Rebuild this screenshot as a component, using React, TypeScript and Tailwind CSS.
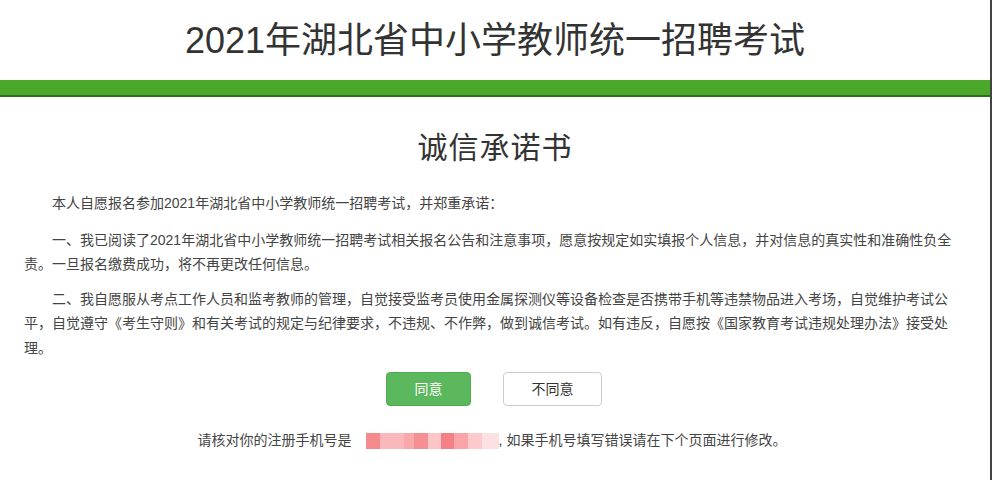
const maskBlocks = [
  { w: 14, c: 'bg-[#f58a8c]' },
  { w: 24, c: 'bg-[#fbb8bc]' },
  { w: 10, c: 'bg-[#f9a8ac]' },
  { w: 14, c: 'bg-[#f58f93]' },
  { w: 13, c: 'bg-[#fcc6c9]' },
  { w: 13, c: 'bg-[#f47f84]' },
  { w: 14, c: 'bg-[#f9a5a8]' },
  { w: 14, c: 'bg-[#fcc9cc]' },
  { w: 17, c: 'bg-[#fde0e2]' },
];

const App = () => {
  return (
    <div className="w-[992px] h-[480px] overflow-hidden bg-white text-[#333] font-['Liberation_Sans','Noto_Sans_CJK_SC',sans-serif] border-r-2 border-[#444]">
      {/* Header */}
      <div className="h-[80px] flex items-center justify-center">
        <h1 className="text-[36px] leading-none text-[#333] pt-[1px]">2021年湖北省中小学教师统一招聘考试</h1>
      </div>
      <div className="h-[17px] bg-[#4ba82a] border-b-2 border-[#2f6e1b]" />

      {/* Content */}
      <div className="bg-white px-6 pt-[36px] pb-10">
        <h2 className="text-center text-[30px] leading-none text-[#333] tracking-[1px]">诚信承诺书</h2>

        <div className="mt-[28px] text-[14px] leading-[24.5px] text-[#444]">
          <p className="indent-[28px]">本人自愿报名参加2021年湖北省中小学教师统一招聘考试，并郑重承诺：</p>
          <p className="indent-[28px] mt-[12px]">
            一、我已阅读了2021年湖北省中小学教师统一招聘考试相关报名公告和注意事项，愿意按规定如实填报个人信息，并对信息的真实性和准确性负全责。一旦报名缴费成功，将不再更改任何信息。
          </p>
          <p className="indent-[28px] mt-[10px]">
            二、我自愿服从考点工作人员和监考教师的管理，自觉接受监考员使用金属探测仪等设备检查是否携带手机等违禁物品进入考场，自觉维护考试公平，自觉遵守《考生守则》和有关考试的规定与纪律要求，不违规、不作弊，做到诚信考试。如有违反，自愿按《国家教育考试违规处理办法》接受处理。
          </p>
        </div>

        <div className="mt-[12px] flex justify-center gap-[32px] pr-[2px]">
          <button className="w-[85px] h-[34px] rounded-[4px] bg-[#5cb85c] text-white text-[14px] border border-[#4cae4c]">同意</button>
          <button className="w-[99px] h-[34px] rounded-[4px] bg-white text-[#333] text-[14px] border border-[#ccc]">不同意</button>
        </div>

        <div className="mt-[24px] flex items-center justify-center text-[14px] text-[#444] pr-[6px]">
          <span>请核对你的注册手机号是</span>
          <span className="ml-[14px] flex h-[16px]">
            {maskBlocks.map((b, i) => (
              <span key={i} className={`h-full ${b.c}`} style={{ width: b.w }} />
            ))}
          </span>
          <span>, 如果手机号填写错误请在下个页面进行修改。</span>
        </div>
      </div>
    </div>
  );
};

export default App;
